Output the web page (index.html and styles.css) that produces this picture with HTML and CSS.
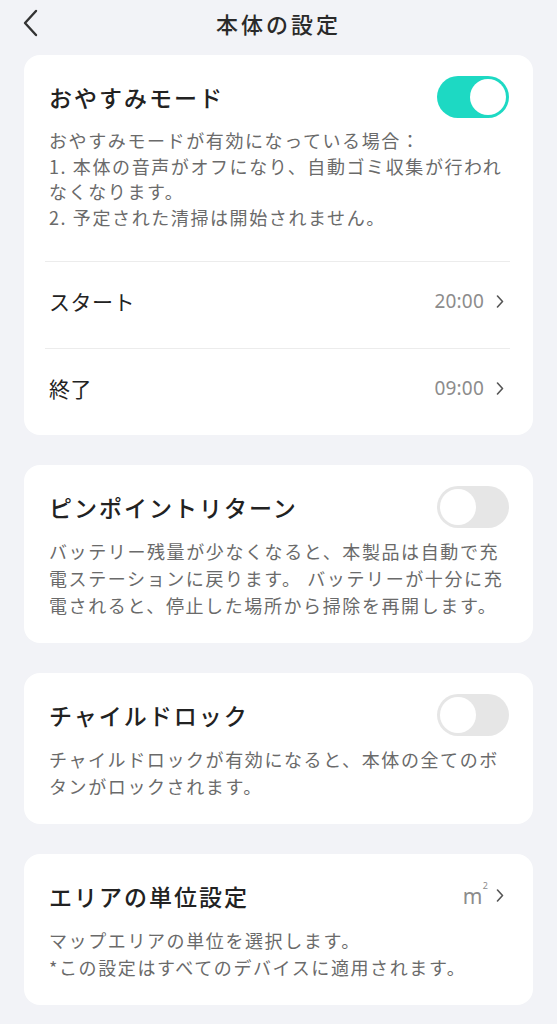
FILE: index.html
```html
<!DOCTYPE html>
<html lang="ja">
<head>
    <meta charset="UTF-8" />
    <meta name="viewport" content="width=device-width, initial-scale=1" />
    <title>本体の設定</title>
    <link rel="stylesheet" href="styles.css">
</head>
<body>

    <!-- ヘッダー -->
    <header class="topbar">
        <button class="back-btn" aria-label="戻る">
            <svg width="16" height="28" viewBox="0 0 16 28">
                <path d="M14 2 L3 14 L14 26" stroke="#333" stroke-width="2.4" fill="none" stroke-linecap="round" stroke-linejoin="round"/>
            </svg>
        </button>
        <h1 class="page-title">本体の設定</h1>
        <span></span>
    </header>

    <main class="list">

        <!-- おやすみモード -->
        <section class="card first">
            <div class="card-head">
                <h2 class="card-title">おやすみモード</h2>
                <span class="switch on"><span class="knob"></span></span>
            </div>
            <p class="desc">おやすみモードが有効になっている場合：<br>1. 本体の音声がオフになり、自動ゴミ収集が行われ<br>なくなります。<br>2. 予定された清掃は開始されません。</p>
            <div class="rows">
                <div class="row">
                    <span class="row-label">スタート</span>
                    <span class="row-value">20:00
                        <svg class="chev" width="8" height="13" viewBox="0 0 8 13"><path d="M1.5 1 L6.5 6.5 L1.5 12" stroke="#555" stroke-width="1.6" fill="none" stroke-linecap="round" stroke-linejoin="round"/></svg>
                    </span>
                </div>
                <div class="row">
                    <span class="row-label">終了</span>
                    <span class="row-value">09:00
                        <svg class="chev" width="8" height="13" viewBox="0 0 8 13"><path d="M1.5 1 L6.5 6.5 L1.5 12" stroke="#555" stroke-width="1.6" fill="none" stroke-linecap="round" stroke-linejoin="round"/></svg>
                    </span>
                </div>
            </div>
        </section>

        <!-- ピンポイントリターン -->
        <section class="card">
            <div class="card-head">
                <h2 class="card-title">ピンポイントリターン</h2>
                <span class="switch"><span class="knob"></span></span>
            </div>
            <p class="desc">バッテリー残量が少なくなると、本製品は自動で充<br>電ステーションに戻ります。 バッテリーが十分に充<br>電されると、停止した場所から掃除を再開します。</p>
        </section>

        <!-- チャイルドロック -->
        <section class="card">
            <div class="card-head">
                <h2 class="card-title">チャイルドロック</h2>
                <span class="switch"><span class="knob"></span></span>
            </div>
            <p class="desc">チャイルドロックが有効になると、本体の全てのボ<br>タンがロックされます。</p>
        </section>

        <!-- エリアの単位 -->
        <section class="card">
            <div class="card-head">
                <h2 class="card-title">エリアの単位設定</h2>
                <span class="row-value unit"><span>m<sup>2</sup></span>
                    <svg class="chev" width="8" height="13" viewBox="0 0 8 13"><path d="M1.5 1 L6.5 6.5 L1.5 12" stroke="#555" stroke-width="1.6" fill="none" stroke-linecap="round" stroke-linejoin="round"/></svg>
                </span>
            </div>
            <p class="desc">マップエリアの単位を選択します。<br>*この設定はすべてのデバイスに適用されます。</p>
        </section>

    </main>

</body>
</html>
```

FILE: styles.css
```css
body {
  margin: 0;
  background-color: #f2f3f7;
  color: #222;
  font-family: "Noto Sans CJK JP", "Noto Sans", sans-serif;
}

/* ヘッダー */
.topbar {
  height: 46px;
  display: grid;
  grid-template-columns: 70px 1fr 70px;
  align-items: center;
}
.back-btn {
  background: none;
  border: none;
  padding: 0 0 0 22px;
  display: flex;
  align-items: center;
  cursor: pointer;
}
.page-title {
  margin: 0;
  text-align: center;
  font-size: 22px;
  font-weight: 500;
  letter-spacing: 3px;
  color: #2a2a2a;
}

/* カード一覧 */
.list {
  padding: 9px 24px 0;
  display: flex;
  flex-direction: column;
  gap: 30px;
}
.card {
  background: #fff;
  border-radius: 16px;
  padding: 20px 24px 24px 25px;
}
.card-head {
  height: 43px;
  display: flex;
  align-items: center;
  justify-content: space-between;
}
.card-title {
  margin: 0;
  font-size: 23px;
  font-weight: 500;
  letter-spacing: 2px;
  color: #222;
}
.desc {
  margin: 10px -14px 0 0;
  font-size: 18px;
  line-height: 27px;
  letter-spacing: 1.6px;
  color: #6a6a6a;
}
.first .desc {
  line-height: 25.5px;
}

/* スイッチ */
.switch {
  width: 72px;
  height: 42px;
  border-radius: 21px;
  background: #e6e6e6;
  display: flex;
  align-items: center;
  padding: 0 3px;
  box-sizing: border-box;
}
.switch .knob {
  width: 36px;
  height: 36px;
  border-radius: 50%;
  background: #fff;
}
.switch.on {
  background: #1dd9c3;
  justify-content: flex-end;
}

/* 時間の行 */
.card.first {
  padding-bottom: 0;
}
.rows {
  margin: 31px -1px 0 -4px;
}
.row {
  height: 87px;
  border-top: 1px solid #ececec;
  display: flex;
  align-items: center;
  justify-content: space-between;
  padding: 0 6px 8px 4px;
  box-sizing: border-box;
}
.row-label {
  font-size: 21px;
  letter-spacing: 0.5px;
  color: #222;
}
.row-value {
  display: flex;
  align-items: center;
  gap: 12px;
  font-size: 19px;
  letter-spacing: 0.2px;
  color: #8c8c8c;
  font-family: "Noto Sans", sans-serif;
}
.unit {
  padding-right: 5px;
  font-size: 21px;
  gap: 8px;
}
.unit sup {
  font-size: 9px;
  vertical-align: top;
  position: relative;
  top: -3px;
  margin-left: 0;
}
.chev {
  display: block;
}
```
